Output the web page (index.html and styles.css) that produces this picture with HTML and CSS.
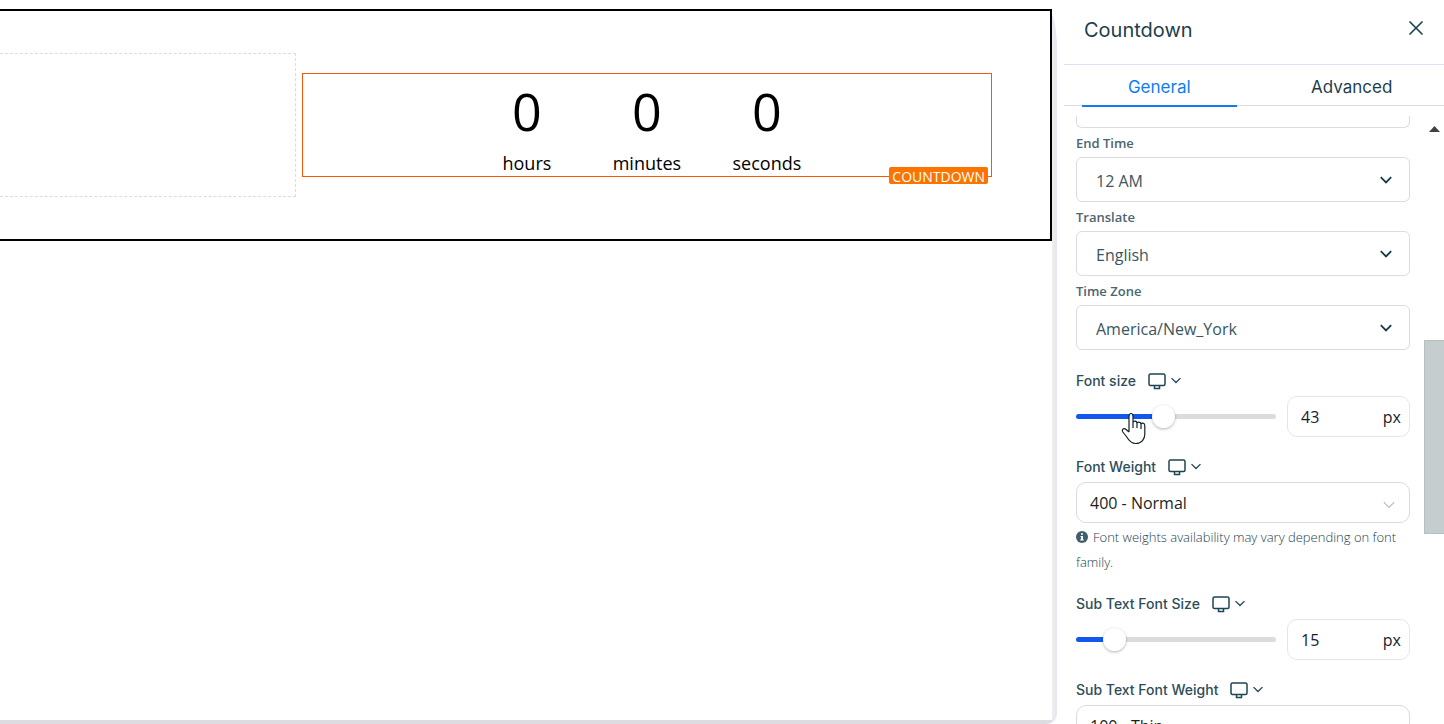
FILE: index.html
```html
<!DOCTYPE html>
<html lang="en">
<head>
<meta charset="utf-8">
<title>Countdown settings</title>
<link rel="stylesheet" href="styles.css">
</head>
<body>
<svg class="defs" aria-hidden="true">
  <symbol id="chevron" viewBox="0 0 14 10"><path d="M1.8 2.2 7 7.4l5.200-5.200"/></symbol>
  <symbol id="monitor" viewBox="0 0 20 18"><rect x="2" y="2" width="16" height="11.500" rx="1.500"/><path d="M7.500 13.500v3h5v-3"/></symbol>
</svg>
<div class="app">
  <main class="workspace">
    <div class="frame">
      <div class="canvas">
        <section class="row">
          <div class="empty-column"></div>
          <div class="widget">
            <div class="timer">
              <div class="unit"><span class="number">0</span><span class="caption">hours</span></div>
              <div class="unit"><span class="number">0</span><span class="caption">minutes</span></div>
              <div class="unit"><span class="number">0</span><span class="caption">seconds</span></div>
            </div>
            <span class="badge">COUNTDOWN</span>
          </div>
        </section>
      </div>
    </div>
  </main>

  <aside class="panel">
    <header class="panel-header">
      <h1 class="title">Countdown</h1>
      <button class="close" type="button" aria-label="Close"><svg viewBox="0 0 16 16"><path d="M1.500 1.500l13 13M14.500 1.500l-13 13"/></svg></button>
    </header>
    <nav class="tabs">
      <button class="tab tab-active" type="button">General</button>
      <button class="tab" type="button">Advanced</button>
    </nav>
    <div class="body">
      <form class="fields">
        <div class="clipped"></div>
        <label class="label" for="end">End Time</label>
        <div class="pick"><select class="select" id="end"><option>12 AM</option></select><svg class="arrow"><use href="#chevron"/></svg></div>
        <label class="label" for="lang">Translate</label>
        <div class="pick"><select class="select" id="lang"><option>English</option></select><svg class="arrow"><use href="#chevron"/></svg></div>
        <label class="label" for="zone">Time Zone</label>
        <div class="pick"><select class="select" id="zone"><option>America/New_York</option></select><svg class="arrow"><use href="#chevron"/></svg></div>

        <div class="group group-first">
          <div class="heading"><label for="size">Font size</label><button class="device" type="button" aria-label="Device"><svg class="monitor"><use href="#monitor"/></svg><svg class="mini"><use href="#chevron"/></svg></button></div>
          <div class="slider-row">
            <div class="slider">
              <input class="range" id="size" type="range" min="0" max="100" value="43" style="--fill:43%">
              <svg class="pointer" viewBox="0 0 26 33"><path d="M9 20V4.500C9 .500 13 .500 13 4.500V11c0-2.500 4-2.500 4 .500 0-2 4-2 4 .800 0-1.800 3.800-1.500 3.800 1.200V22c0 5-3 9.500-9 9.500-5 0-7-3-9-6.500l-4-5c-1.500-2.500 1-4.500 3-2.800L9 20M13 11v5M17 11.500V16M21 12.500V17"/></svg>
            </div>
            <div class="amount"><input class="number-input" type="text" value="43" aria-label="Font size value"><span>px</span></div>
          </div>
        </div>

        <div class="group">
          <div class="heading"><label for="weight">Font Weight</label><button class="device" type="button" aria-label="Device"><svg class="monitor"><use href="#monitor"/></svg><svg class="mini"><use href="#chevron"/></svg></button></div>
          <div class="pick"><select class="select select-round" id="weight"><option>400 - Normal</option></select><svg class="arrow arrow-pale"><use href="#chevron"/></svg></div>
          <p class="help"><svg class="info" viewBox="0 0 12 12"><circle cx="6" cy="6" r="6"/><path d="M5 2.200h2v1.600H5zM4.500 5H7v3.200h.700v1.200H4.300V8.200H5V6h-.500z"/></svg>Font weights availability may vary depending on font family.</p>
        </div>

        <div class="group">
          <div class="heading"><label for="subsize">Sub Text Font Size</label><button class="device" type="button" aria-label="Device"><svg class="monitor"><use href="#monitor"/></svg><svg class="mini"><use href="#chevron"/></svg></button></div>
          <div class="slider-row">
            <div class="slider"><input class="range" id="subsize" type="range" min="0" max="100" value="15" style="--fill:15%"></div>
            <div class="amount"><input class="number-input" type="text" value="15" aria-label="Sub text font size value"><span>px</span></div>
          </div>
        </div>

        <div class="group">
          <div class="heading"><label for="subweight">Sub Text Font Weight</label><button class="device" type="button" aria-label="Device"><svg class="monitor"><use href="#monitor"/></svg><svg class="mini"><use href="#chevron"/></svg></button></div>
          <div class="pick"><select class="select select-round" id="subweight"><option>100 - Thin</option></select><svg class="arrow arrow-pale"><use href="#chevron"/></svg></div>
        </div>
      </form>
      <div class="scrollbar"><svg class="scroll-up" viewBox="0 0 11 6"><path d="M5.500 0 11 6H0z"/></svg><div class="thumb"></div></div>
    </div>
  </aside>
</div>
</body>
</html>
```

FILE: styles.css
```css
* { box-sizing: border-box; }
body { margin: 0; background: #fff; color: #1d3f4b; font-family: "Open Sans", sans-serif; }
button { border: 0; padding: 0; background: none; color: inherit; font: inherit; }
.defs { display: none; }
.app { display: grid; grid-template-columns: minmax(0, 1fr) 380px; height: 100vh; overflow: hidden; }

/* Canvas */
.workspace { display: flex; padding: 9px 7px 0 0; min-height: 0; }
.frame { flex: 1; display: flex; padding: 0 3px 4px 0; background: linear-gradient(#ececee, #ececee) right / 3px 100% no-repeat, #dddce0; border-right: 2px solid #ebe4f7; border-radius: 0 10px 10px 0 / 0 40px 10px 0; }
.canvas { flex: 1; background: #fff; }
.row { display: grid; grid-template-columns: 3fr 7fr; gap: 6px; padding: 42px 58px 42px 0; border: 2px solid #000; border-left: 0; }
.empty-column { height: 144px; border: 1px dashed #dcdae8; border-left: 0; }
.widget { position: relative; align-self: start; margin-top: 20px; height: 104px; border: 1px solid #f4580a; color: #000; }
.timer { display: flex; justify-content: center; }
.unit { display: flex; flex-direction: column; width: 120px; text-align: center; }
.number { padding-bottom: 2px; font-size: 52px; line-height: 74px; }
.caption { font-size: 18px; line-height: 26px; }
.badge { position: absolute; right: 3px; bottom: -8px; padding: 2px 3px 0; border-radius: 2px; background: #fb7400; color: #fff; font-size: 14px; line-height: 15px; }

/* Settings panel */
.panel { display: flex; flex-direction: column; min-height: 0; }
.panel-header { display: flex; align-items: center; justify-content: space-between; height: 65px; padding: 0 20px 4px 20px; border-bottom: 1px solid #d9e2ee; }
.title { margin: 0; font: 400 20px/28px Inter, sans-serif; }
.close { display: flex; padding: 0 0 4px; }
.close svg { width: 16px; height: 16px; fill: none; stroke: #1d3f4b; stroke-width: 1.6; }
.tabs { display: grid; grid-template-columns: 1fr 1fr; gap: 38px; height: 41px; padding: 0 15px 0 18px; border-bottom: 1px solid #dcdcea; margin-bottom: 10px; }
.tab { height: 42px; border-bottom: 2px solid transparent; font: 400 17px/24px Inter, sans-serif; padding-top: 4px; }
.tab-active { border-color: #0d7df2; color: #0d7df2; }
.body { flex: 1; display: flex; min-height: 0; overflow: hidden; }
.fields { flex: 1; padding: 0 14px 0 12px; }
.clipped { height: 12px; border: 1px solid #dadce0; border-top: 0; border-radius: 0 0 6px 6px; }
.label { display: block; padding-top: 2px; color: #4c6570; font-size: 13px; font-weight: 600; line-height: 27px; }
.pick { position: relative; }
.select { display: block; appearance: none; width: 100%; height: 45px; padding: 2px 44px 0 19px; border: 1px solid #dadce0; border-radius: 6px; background: #fff; color: #3a5660; font: 400 16px "Open Sans", sans-serif; }
.select-round { height: 41px; padding: 0 44px 0 13px; border-color: #d8dbe5; border-radius: 10px; color: #1c1f22; }
.arrow { position: absolute; right: 17px; top: 18px; width: 14px; height: 10px; fill: none; stroke: #173a48; stroke-width: 1.8; pointer-events: none; }
.arrow-pale { right: 14px; stroke: #b8bdc0; stroke-width: 1.2; }

.group { padding-top: 15px; }
.group-first { padding-top: 16px; }
.heading { display: flex; align-items: center; gap: 9px; height: 30px; padding-bottom: 1px; font: 500 14px/28px Inter, sans-serif; color: #2d4d59; }
.heading label { padding-right: 2px; }
.device { display: flex; align-items: center; gap: 3px; }
.monitor { width: 20px; height: 18px; fill: none; stroke: #1d4552; stroke-width: 1.5; }
.mini { width: 12px; height: 9px; fill: none; stroke: #1d4552; stroke-width: 1.5; }
.slider-row { display: grid; grid-template-columns: 1fr 123px; gap: 11px; align-items: center; height: 41px; }
.slider { position: relative; display: flex; }
.range { appearance: none; width: 100%; height: 23px; margin: 0; background: none; }
.range::-webkit-slider-runnable-track { height: 5px; border-radius: 3px; background: linear-gradient(#1058f0, #1058f0) left / var(--fill) 100% no-repeat, #dcdcdc; }
.range::-webkit-slider-thumb { appearance: none; width: 23px; height: 23px; margin-top: -9px; border-radius: 50%; background: #fff; box-shadow: 0 1px 3px #0000004d; }
.pointer { position: absolute; left: 44px; top: 7px; width: 26px; height: 33px; fill: #fff; stroke: #14202b; stroke-width: 1.2; stroke-linejoin: round; }
.amount { display: flex; align-items: center; height: 41px; padding: 0 8px 0 13px; border: 1px solid #e6e5ef; border-radius: 10px; color: #18212a; font-size: 16px; }
.number-input { flex: 1; width: 20px; min-width: 0; padding: 0; border: 0; background: none; color: inherit; font: 400 16px "Open Sans", sans-serif; }
.help { margin: 0; padding-top: 2px; height: 51px; color: #24414d; font-size: 13px; font-weight: 300; line-height: 25px; }
.info { width: 12px; height: 12px; margin-right: 5px; vertical-align: -1px; fill: #3f5f6b; }
.info path { fill: #fff; }

.scrollbar { width: 20px; }
.scroll-up { display: block; width: 11px; height: 6px; margin: 10px auto 0; fill: #3c4242; }
.thumb { height: 194px; margin-top: 208px; border: 1px solid #b6c0c1; border-right: 0; background: #c5cdcf; }
```
